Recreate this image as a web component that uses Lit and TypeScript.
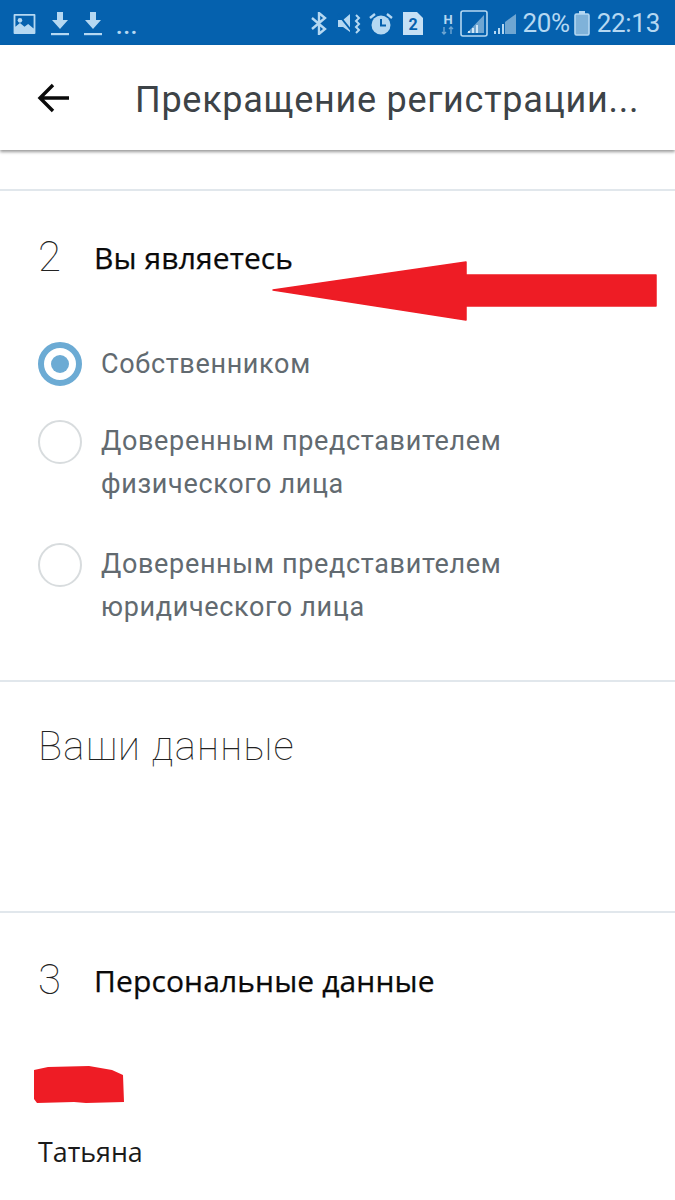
import { LitElement, html, css } from "lit";
import { customElement } from "lit/decorators.js";

const dl = html`<svg width="18" height="24" viewBox="0 0 18 24"><path d="M6 0h6v8h5l-8 9-8-9h5z" fill="#b5d8f2"/><rect x="0" y="21" width="18" height="2.2" fill="#b5d8f2"/></svg>`;

@customElement("app-root")
export class AppRoot extends LitElement {
  static styles = css`
    :host { display: block; width: 675px; height: 1200px; overflow: hidden; position: relative; background: #fff; font-family: Roboto, "Noto Sans", sans-serif; }
    .status { height: 45px; background: #0561ae; display: flex; align-items: center; padding: 2px 15px 0 13px; color: #b5d8f2; box-sizing: border-box; }
    .status .left { display: flex; align-items: center; gap: 15px; }
    .status .right { margin-left: auto; display: flex; align-items: center; }
    .dots { font-size: 22px; letter-spacing: 1px; line-height: 1; margin-top: 6px; font-weight: 700; margin-left: -1px; }
    .st { font-size: 26px; letter-spacing: -0.3px; line-height: 43px; white-space: nowrap; }
    .m-bt { margin-right: 10px; }
    .m-mute { margin-right: 8px; }
    .m-alarm { margin-right: 10px; }
    .m-sim { margin-right: 18px; }
    .m-h { margin-right: 5px; }
    .m-sig1 { margin-right: 5px; }
    .m-sig2 { margin-right: 5px; }
    .m-bat { margin: 0 7px 0 4px; }
    .appbar { height: 105px; background: #fff; display: flex; align-items: center; box-shadow: 0 2px 3px rgba(0,0,0,.4); position: relative; box-sizing: border-box; padding: 4px 0 0 37px; }
    .back { margin-top: -4px; }
    .appbar h1 { margin: 0 0 0 66px; font-size: 36px; font-weight: 400; color: #3d4347; letter-spacing: 0.72px; white-space: nowrap; }
    .section { border-top: 2px solid #e1e7ec; }
    .s2 { margin-top: 39px; height: 491px; box-sizing: border-box; padding: 39px 38px 0; }
    .head { display: flex; align-items: center; height: 54px; }
    .num { width: 56px; font-weight: 100; font-size: 42px; color: #222; line-height: 54px; }
    .ttl { font-family: "Open Sans", sans-serif; font-size: 30px; color: #0a0a0a; font-weight: 400; letter-spacing: 0.12px; white-space: nowrap; -webkit-text-stroke: 0.25px #0a0a0a; }
    .radio { display: flex; align-items: flex-start; }
    .r1 { margin-top: 58px; align-items: center; }
    .r2 { margin-top: 34px; }
    .r3 { margin-top: 37px; }
    .dot { width: 44px; height: 44px; border-radius: 50%; box-sizing: border-box; border: 2px solid #d8dcde; flex: none; margin-right: 19px; }
    .dot.on { border: 6px solid #6cabd4; display: flex; align-items: center; justify-content: center; }
    .dot.on::after { content: ""; width: 18px; height: 18px; border-radius: 50%; background: #6cabd4; }
    .lbl { font-size: 27px; line-height: 43px; color: #626a70; letter-spacing: 0.66px; white-space: pre-line; }
    .s3 { height: 231px; box-sizing: border-box; padding: 38px 38px 0; }
    .big { font-weight: 100; font-size: 40px; line-height: 54px; color: #222; letter-spacing: 1.2px; }
    .s4 { padding: 40px 38px 0; }
    .red { display: block; margin: 59px 0 0 -4px; }
    .name { margin-top: 28px; font-family: "Open Sans", sans-serif; font-size: 26.8px; color: #1a1a1a; line-height: 40px; }
    .arrow { position: absolute; left: 272px; top: 261px; }
  `;

  render() {
    return html`
      <div class="status">
        <div class="left">
          <svg width="23" height="20" viewBox="0 0 24 22"><path fill-rule="evenodd" d="M1 0h22a1 1 0 0 1 1 1v20a1 1 0 0 1-1 1H1a1 1 0 0 1-1-1V1a1 1 0 0 1 1-1zm1 2v12l5-4 5 4 4-3 6 5V2z" fill="#b5d8f2"/><circle cx="7" cy="7" r="2.5" fill="#b5d8f2"/></svg>
          ${dl}${dl}
          <span class="dots">...</span>
        </div>
        <div class="right">
          <svg class="m-bt" width="16" height="23" viewBox="0 0 16 23"><path d="M1 6l13 11-6 5V1l6 5L1 17" fill="none" stroke="#b5d8f2" stroke-width="2.4"/></svg>
          <svg class="m-mute" width="24" height="22" viewBox="0 0 24 22"><path d="M1 7h5l7-6v18l-7-5H1z" fill="#b5d8f2"/><path d="M1 1l16 20" stroke="#0561ae" stroke-width="2"/><path d="M19 2l3 3-3 3 3 3-3 3 3 3-3 3" fill="none" stroke="#b5d8f2" stroke-width="2"/></svg>
          <svg class="m-alarm" width="24" height="24" viewBox="0 0 24 24"><circle cx="12" cy="13" r="9.5" fill="#b5d8f2"/><path d="M12 7v6.5h5" fill="none" stroke="#0561ae" stroke-width="2"/><path d="M1 6l5-4M23 6l-5-4" stroke="#b5d8f2" stroke-width="2.4"/></svg>
          <svg class="m-sim" width="20" height="23" viewBox="0 0 20 23"><path d="M0 0h14l6 6v17H0z" fill="#c6e0f5"/><text x="10" y="18" text-anchor="middle" font-family="Roboto" font-size="16" font-weight="700" fill="#0561ae">2</text></svg>
          <svg class="m-h" width="14" height="24" viewBox="0 0 14 24"><text x="7" y="12" text-anchor="middle" font-family="Roboto" font-size="13" font-weight="700" fill="#b5d8f2">H</text><path d="M3 15v7M1 20l2 2 2-2M10 22v-7M8 17l2-2 2 2" fill="none" stroke="#6fa6d2" stroke-width="1.4"/></svg>
          <svg class="m-sig1" width="28" height="27" viewBox="0 0 28 27"><rect x="1" y="1" width="26" height="25" rx="2" fill="none" stroke="#b5d8f2" stroke-width="1.6"/><path d="M24 5v18H7z" fill="#6fa6d2"/><path d="M8 21h2v2H8zM12 18h2v5h-2zM16 15h2v8h-2z" fill="#d0e6f7"/></svg>
          <svg class="m-sig2" width="24" height="22" viewBox="0 0 24 22"><path d="M23 1v20H12V9z" fill="#6fa6d2"/><path d="M1 18h2v3H1zM5 15h2v6H5zM9 11h2v10H9z" fill="#b5d8f2"/></svg>
          <span class="st">20%</span>
          <svg class="m-bat" width="16" height="25" viewBox="0 0 16 25"><rect x="5" y="0" width="6" height="3" fill="#b5d8f2"/><rect x="1" y="3" width="14" height="21" rx="1.5" fill="#7fb2d9" stroke="#b5d8f2" stroke-width="1.6"/></svg>
          <span class="st">22:13</span>
        </div>
      </div>
      <div class="appbar">
        <svg class="back" width="32" height="30" viewBox="0 0 32 30"><path d="M32 15H3M16 2L3 15l13 13" fill="none" stroke="#0a0a0a" stroke-width="3.4"/></svg>
        <h1>Прекращение регистрации...</h1>
      </div>
      <div class="section s2">
        <div class="head"><span class="num">2</span><span class="ttl">Вы являетесь</span></div>
        <div class="radio r1"><span class="dot on"></span><span class="lbl">Собственником</span></div>
        <div class="radio r2"><span class="dot"></span><span class="lbl">Доверенным представителем
физического лица</span></div>
        <div class="radio r3"><span class="dot"></span><span class="lbl">Доверенным представителем
юридического лица</span></div>
      </div>
      <div class="section s3"><div class="big">Ваши данные</div></div>
      <div class="section s4">
        <div class="head"><span class="num">3</span><span class="ttl">Персональные данные</span></div>
        <svg class="red" width="90" height="38" viewBox="0 0 90 38"><path d="M0 4L14 1 55 0 78 4 89 9 90 36 52 37 40 36 3 37 0 33z" fill="#ee1c25"/></svg>
        <div class="name">Татьяна</div>
      </div>
      <svg class="arrow" width="386" height="60" viewBox="0 0 386 60"><path d="M1 29L194 1v13h190v31H194v14z" fill="#ee1c25" stroke="#ee1c25" stroke-width="1.5" stroke-linejoin="round"/></svg>
    `;
  }
}
